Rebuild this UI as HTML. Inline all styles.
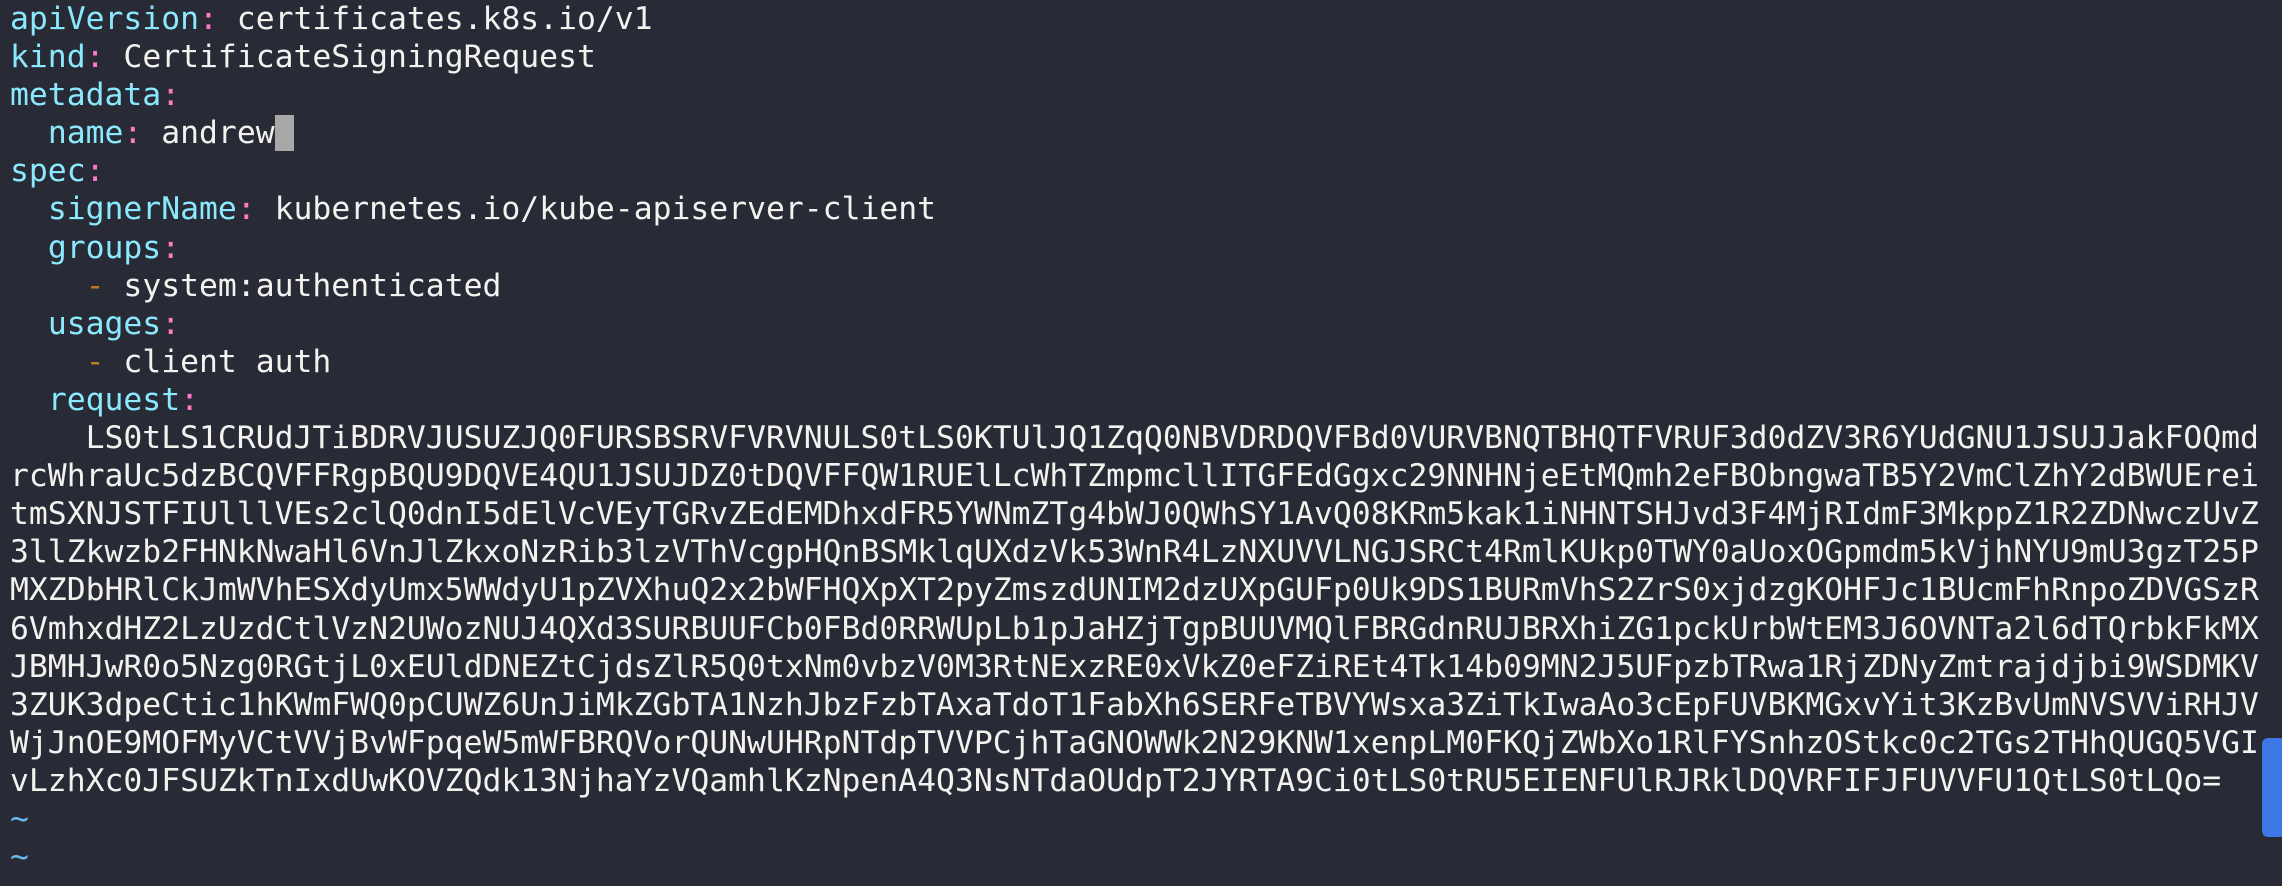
<!DOCTYPE html>
<html><head><meta charset="utf-8"><style>
html,body{margin:0;padding:0;}
body{width:2282px;height:886px;background:#282a36;overflow:hidden;position:relative;}
pre{margin:0;position:absolute;left:10px;top:0;font-family:"DejaVu Sans Mono","Liberation Mono",monospace;font-size:31.4px;line-height:38.1px;color:#f2f2ee;white-space:pre;}
.k{color:#8be9fd}.c{color:#ff79c6}.d{color:#c07a22}.t{color:#6cb8f0}
.cur{background:#a8a8a8;color:#282a36}
#sb{position:absolute;left:2262px;top:738px;width:24px;height:99px;background:#3d78e6;border-radius:6px;}
</style></head><body>
<pre><span class="k">apiVersion</span><span class="c">:</span> certificates.k8s.io/v1
<span class="k">kind</span><span class="c">:</span> CertificateSigningRequest
<span class="k">metadata</span><span class="c">:</span>
  <span class="k">name</span><span class="c">:</span> andrew<span class="cur"> </span>
<span class="k">spec</span><span class="c">:</span>
  <span class="k">signerName</span><span class="c">:</span> kubernetes.io/kube-apiserver-client
  <span class="k">groups</span><span class="c">:</span>
    <span class="d">-</span> system:authenticated
  <span class="k">usages</span><span class="c">:</span>
    <span class="d">-</span> client auth
  <span class="k">request</span><span class="c">:</span>
    LS0tLS1CRUdJTiBDRVJUSUZJQ0FURSBSRVFVRVNULS0tLS0KTUlJQ1ZqQ0NBVDRDQVFBd0VURVBNQTBHQTFVRUF3d0dZV3R6YUdGNU1JSUJJakFOQmd
rcWhraUc5dzBCQVFFRgpBQU9DQVE4QU1JSUJDZ0tDQVFFQW1RUElLcWhTZmpmcllITGFEdGgxc29NNHNjeEtMQmh2eFBObngwaTB5Y2VmClZhY2dBWUErei
tmSXNJSTFIUlllVEs2clQ0dnI5dElVcVEyTGRvZEdEMDhxdFR5YWNmZTg4bWJ0QWhSY1AvQ08KRm5kak1iNHNTSHJvd3F4MjRIdmF3MkppZ1R2ZDNwczUvZ
3llZkwzb2FHNkNwaHl6VnJlZkxoNzRib3lzVThVcgpHQnBSMklqUXdzVk53WnR4LzNXUVVLNGJSRCt4RmlKUkp0TWY0aUoxOGpmdm5kVjhNYU9mU3gzT25P
MXZDbHRlCkJmWVhESXdyUmx5WWdyU1pZVXhuQ2x2bWFHQXpXT2pyZmszdUNIM2dzUXpGUFp0Uk9DS1BURmVhS2ZrS0xjdzgKOHFJc1BUcmFhRnpoZDVGSzR
6VmhxdHZ2LzUzdCtlVzN2UWozNUJ4QXd3SURBUUFCb0FBd0RRWUpLb1pJaHZjTgpBUUVMQlFBRGdnRUJBRXhiZG1pckUrbWtEM3J6OVNTa2l6dTQrbkFkMX
JBMHJwR0o5Nzg0RGtjL0xEUldDNEZtCjdsZlR5Q0txNm0vbzV0M3RtNExzRE0xVkZ0eFZiREt4Tk14b09MN2J5UFpzbTRwa1RjZDNyZmtrajdjbi9WSDMKV
3ZUK3dpeCtic1hKWmFWQ0pCUWZ6UnJiMkZGbTA1NzhJbzFzbTAxaTdoT1FabXh6SERFeTBVYWsxa3ZiTkIwaAo3cEpFUVBKMGxvYit3KzBvUmNVSVViRHJV
WjJnOE9MOFMyVCtVVjBvWFpqeW5mWFBRQVorQUNwUHRpNTdpTVVPCjhTaGNOWWk2N29KNW1xenpLM0FKQjZWbXo1RlFYSnhzOStkc0c2TGs2THhQUGQ5VGI
vLzhXc0JFSUZkTnIxdUwKOVZQdk13NjhaYzVQamhlKzNpenA4Q3NsNTdaOUdpT2JYRTA9Ci0tLS0tRU5EIENFUlRJRklDQVRFIFJFUVVFU1QtLS0tLQo=
<span class="t">~</span>
<span class="t">~</span></pre>
<div id="sb"></div>
</body></html>
